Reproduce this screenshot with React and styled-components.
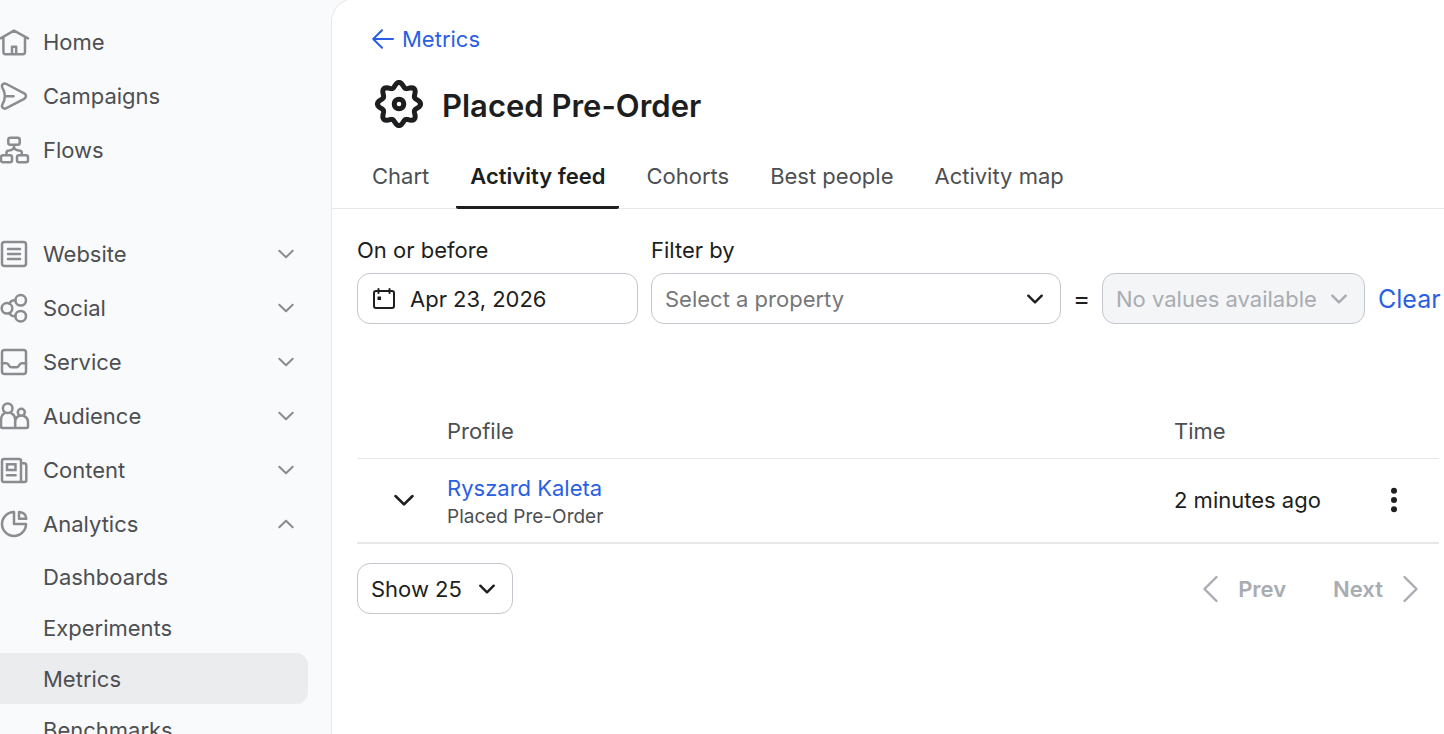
import React from "react";
import styled, { createGlobalStyle } from "styled-components";

const color = {
  ink: "#1d1e20",
  text: "#4d4f52",
  icon: "#8b8c8f",
  muted: "#76777a",
  disabled: "#a9acb1",
  blue: "#2a5fe4",
  line: "#e7e8ea",
  control: "#c3c6cc",
  sidebar: "#f9fafc",
};

const GlobalStyle = createGlobalStyle`
  * { box-sizing: border-box; }
  body {
    margin: 0;
    background: ${color.sidebar};
    color: ${color.ink};
    font-family: Inter, "Liberation Sans", sans-serif;
    font-size: 22px;
    line-height: 28px;
  }
  a { text-decoration: none; }
  button, input, select { font: inherit; color: inherit; margin: 0; }
  svg { display: block; flex: none; fill: none; stroke: currentColor; }
`;

/* ---------- layout ---------- */

const Shell = styled.div`
  display: flex;
  height: 100vh;
  overflow: hidden;
`;

const Sidebar = styled.nav`
  flex: 0 0 331px;
  display: flex;
  flex-direction: column;
  gap: 50px;
  padding: 15px 23px 0 0;
`;

const NavList = styled.ul`
  list-style: none;
  margin: 0;
  padding: 0;
`;

const NavLink = styled.a`
  display: flex;
  align-items: center;
  gap: 13px;
  height: 54px;
  color: ${color.text};
`;

const NavToggle = styled.button`
  display: flex;
  align-items: center;
  gap: 13px;
  width: 100%;
  height: 54px;
  padding: 0 14px 0 0;
  border: 0;
  background: none;
  color: ${color.text};
  text-align: left;
`;

const NavIcon = styled.svg.attrs({ width: 30, height: 30, viewBox: "0 0 30 30", "aria-hidden": true })`
  color: ${color.icon};
  stroke-width: 2.5;
  stroke-linecap: round;
  stroke-linejoin: round;
`;

const NavLabel = styled.span`
  flex: 1;
`;

const SubLink = styled.a`
  display: flex;
  align-items: center;
  height: 51px;
  padding-left: 43px;
  border-radius: 0 12px 12px 0;
  color: ${color.text};
  background: ${(p) => (p.$active ? "#ebecee" : "transparent")};
`;

const Main = styled.main`
  flex: 1;
  min-width: 0;
  margin-top: -2px;
  padding-top: 26px;
  overflow: hidden;
  background: #fff;
  border: solid ${color.line};
  border-width: 1px 0 0 1px;
  border-top-left-radius: 24px;
`;

const Header = styled.header`
  padding: 0 40px;
`;

const BackLink = styled.a`
  display: inline-flex;
  align-items: center;
  gap: 8px;
  color: ${color.blue};
`;

const TitleRow = styled.div`
  display: flex;
  align-items: flex-start;
  gap: 16px;
  margin-top: 22px;
`;

const Title = styled.h1`
  margin: 0;
  font-size: 31px;
  line-height: 58px;
  font-weight: 600;
`;

const Tabs = styled.div`
  display: flex;
  gap: 13px;
  margin-top: 12px;
  padding: 0 26px;
  border-bottom: 1px solid ${color.line};
`;

const Tab = styled.button`
  height: 62px;
  margin-bottom: -1px;
  padding: 0 14px 4px;
  border: 0;
  border-radius: 2px;
  background: linear-gradient(${(p) => (p.$active ? color.ink : "transparent")} 0 0) bottom / 100% 3px no-repeat;
  color: ${(p) => (p.$active ? color.ink : color.text)};
  font-weight: ${(p) => (p.$active ? 600 : 400)};
  white-space: nowrap;
`;

const Body = styled.div`
  padding: 27px 5px 0 25px;
`;

const Filters = styled.form`
  display: flex;
  align-items: flex-end;
  gap: 13px;
`;

const Field = styled.div`
  display: flex;
  flex-direction: column;
  gap: 9px;
  flex: ${(p) => p.$flex || "none"};
  min-width: 0;
`;

const Inline = styled.div`
  display: flex;
  align-items: center;
  justify-content: center;
  height: 51px;
`;

const Operator = styled(Inline)`
  width: 15px;
  font-size: 26px;
`;

const Clear = styled.button`
  padding: 0;
  border: 0;
  background: none;
  color: ${color.blue};
  font-size: 25px;
  width: 61px;
  text-align: left;
`;

/* ---------- controls ---------- */

const Control = styled.div`
  display: grid;
  grid-template-columns: ${(p) => (p.$leading ? "auto 1fr" : "1fr auto")};
  align-items: center;
  height: 51px;
  border: 1px solid ${color.control};
  border-radius: 13px;
  overflow: hidden;
  background: ${(p) => (p.$disabled ? "#f4f5f7" : "#fff")};
  color: ${(p) => (p.$disabled ? color.disabled : color.ink)};

  > svg {
    grid-row: 1;
    grid-column: ${(p) => (p.$leading ? 1 : 2)};
    margin: 0 ${(p) => (p.$leading ? 0 : 17)}px 0 ${(p) => (p.$leading ? 14 : 0)}px;
    pointer-events: none;
  }
`;

const DateInput = styled.input`
  grid-row: 1;
  grid-column: 2;
  width: 100%;
  height: 49px;
  padding: 0 14px;
  border: 0;
  outline: 0;
  background: none;
`;

const Select = styled.select`
  grid-row: 1;
  grid-column: 1 / -1;
  width: 100%;
  height: 49px;
  padding: 0 40px 0 13px;
  border: 0;
  outline: 0;
  opacity: 1;
  appearance: none;
  background: none;
  color: ${(p) => (p.$placeholder ? color.muted : "inherit")};
`;

/* ---------- table ---------- */

const Table = styled.table`
  width: 100%;
  margin-top: 80px;
  table-layout: fixed;
  border-collapse: collapse;
  border-bottom: 2px solid ${color.line};
`;

const HeadCell = styled.th`
  height: 54px;
  padding: 0;
  border-bottom: 1px solid ${color.line};
  color: ${color.text};
  font-weight: 400;
  text-align: left;
`;

const Cell = styled.td`
  height: 85px;
  padding: 0;
  text-align: left;
  vertical-align: middle;

  &:first-child { padding-left: 4px; }
`;

const IconButton = styled.button`
  display: flex;
  justify-content: center;
  align-items: center;
  width: 100%;
  height: 48px;
  padding: 0;
  border: 0;
  background: none;
`;

const ProfileLink = styled.a`
  display: block;
  padding-top: 4px;
  line-height: 30px;
  color: ${color.blue};
`;

const EventName = styled.div`
  color: ${color.text};
  font-size: 19px;
`;

const Footer = styled.div`
  display: flex;
  align-items: center;
  justify-content: space-between;
  margin-top: 19px;
`;

const Pager = styled.div`
  display: flex;
  gap: 47px;
  padding-right: 21px;
`;

const PagerButton = styled.button`
  display: flex;
  align-items: center;
  gap: 20px;
  padding: 0;
  border: 0;
  background: none;
  font-weight: 600;
  && { color: ${color.disabled}; }
`;

/* ---------- icons ---------- */

const Chevron = ({ up, width = 16, stroke = 2, ...rest }) => (
  <svg width={width} height={(width * 5) / 8} viewBox="0 0 16 10" strokeWidth={stroke} strokeLinecap="round" strokeLinejoin="round" aria-hidden="true" {...rest}>
    <path d={up ? "M1.3 8.3 8 1.7 14.7 8.3" : "M1.3 1.7 8 8.3 14.7 1.7"} />
  </svg>
);

const icons = {
  home: <path d="M.5 11.3 14 3.7 28 11.300M3.400 10.500V25A2.200 2.200 0 0 0 5.600 27.200H22.800A2.200 2.200 0 0 0 25 25V10.500M12 27V19.700H16.200V27" />,
  campaigns: <path d="M2.200 6.400C1.200 3.400 3.800 1.700 6.400 3L24.200 12.300Q27.800 15.100 24.200 17.900L6.400 27.200C3.800 28.500 1.200 26.800 2.200 23.800Q7.600 15.100 2.200 6.400ZM5.500 15.200H13.500" />,
  flows: (
    <>
      <rect x="8.300" y="2.700" width="11.400" height="7" rx="2" />
      <rect x="1" y="20.300" width="11" height="7" rx="2" />
      <rect x="17" y="20.300" width="11" height="7" rx="2" />
      <path d="M14 10V12.500M6.500 20V17.500Q6.500 15.700 9 15.500 13.500 15 14 12 14.500 15 19 15.500 21.800 15.700 21.800 17.500V20" />
    </>
  ),
  website: (
    <>
      <rect x="2" y="3" width="24" height="24" rx="2.500" />
      <path d="M8 10H20M8 15H20M8 20H20" />
    </>
  ),
  social: (
    <>
      <circle cx="7" cy="15.300" r="5.300" />
      <circle cx="20.700" cy="7.300" r="5.300" />
      <circle cx="20.700" cy="23.200" r="5.300" />
      <path d="M9 10.400 11.500 8Q13 7.200 15.400 7.300M9 20.200 11.500 22.500Q13 23.300 15.400 23.200" />
    </>
  ),
  service: (
    <>
      <rect x="2" y="3" width="24" height="24" rx="2.500" />
      <path d="M2 16.200H6.500C9 16.200 8.500 20.300 11.500 20.300H16.500C19.500 20.300 19 16.200 21.500 16.200H26" />
    </>
  ),
  audience: (
    <>
      <circle cx="7.700" cy="7.300" r="4.800" />
      <circle cx="21.300" cy="11.300" r="3.500" />
      <path d="M4.600 12.200C2 13.500 1 16 1 19V25.500Q1 27 2.500 27H26.500Q28 27 28 25.500V21.500C28 18.500 26.500 16 23.800 15M11 12.200C14 13.500 15.200 16 15.200 19V27M15.200 21C15.200 18 16.500 16 18.800 15" />
    </>
  ),
  content: (
    <>
      <path d="M21 27H4Q2 27 2 25V6Q2 4 4 4H19Q21 4 21 6V27H24.500Q26.300 27 26.300 25V10.500Q26.300 8.300 24 8.300H21" />
      <rect x="7" y="9.300" width="8.500" height="5.700" strokeLinejoin="miter" />
      <path d="M7 20.300H15.500" />
    </>
  ),
  analytics: (
    <path d="M14 3A12 12 0 1 0 26 15H14ZM19 3Q26 3.500 26.300 9.800H19Z" />
  ),
};

// Closed outline of an eight-lobed gear, sampled around its centre.
const gearPath =
  Array.from({ length: 96 }, (_, i) => {
    const t = (i / 96) * Math.PI * 2;
    const r = 19.2 + 2.4 * Math.cos(8 * t);
    return `${i ? "L" : "M"}${(27 + r * Math.sin(t)).toFixed(2)} ${(27 - r * Math.cos(t)).toFixed(2)}`;
  }).join("") + "Z";

const GearIcon = () => (
  <svg width="54" height="54" viewBox="0 0 54 54" strokeWidth="5" strokeLinejoin="round" aria-hidden="true">
    <path d={gearPath} />
    <circle cx="27" cy="27" r="4.800" />
  </svg>
);

const ArrowLeft = () => (
  <svg width="22" height="20" viewBox="0 0 22 20" strokeWidth="2" strokeLinecap="round" strokeLinejoin="round" aria-hidden="true">
    <path d="M10 1.200 1.200 10 10 18.800M1.200 10H21" />
  </svg>
);

const CalendarIcon = () => (
  <svg width="24" height="22" viewBox="0 0 24 22" strokeWidth="2" strokeLinecap="round" strokeLinejoin="round" aria-hidden="true">
    <path d="M4 3H20Q22 3 22 5V18Q22 20 20 20H4Q2 20 2 18V5Q2 3 4 3ZM6.500 1V5M17.500 1V5" />
    <rect x="5.500" y="8.500" width="3.500" height="3.500" fill="currentColor" stroke="none" />
  </svg>
);

const DotsIcon = () => (
  <svg width="8" height="26" viewBox="0 0 8 26" aria-hidden="true">
    {[3.8, 13, 22.2].map((y) => (
      <circle key={y} cx="4" cy={y} r="3" fill="currentColor" stroke="none" />
    ))}
  </svg>
);

const PageArrow = ({ next }) => (
  <svg width="15" height="28" viewBox="0 0 15 28" strokeWidth="2.400" strokeLinecap="round" strokeLinejoin="round" aria-hidden="true">
    <path d={next ? "M1.500 2 13.500 14 1.500 26" : "M13.500 2 1.500 14 13.500 26"} />
  </svg>
);

/* ---------- page ---------- */

const primary = [
  ["Home", "home"],
  ["Campaigns", "campaigns"],
  ["Flows", "flows"],
];
const groups = [
  ["Website", "website"],
  ["Social", "social"],
  ["Service", "service"],
  ["Audience", "audience"],
  ["Content", "content"],
  ["Analytics", "analytics"],
];
const analyticsPages = ["Dashboards", "Experiments", "Metrics", "Benchmarks"];
const tabs = ["Chart", "Activity feed", "Cohorts", "Best people", "Activity map"];

export default function App() {
  return (
    <>
      <GlobalStyle />
      <Shell>
        <Sidebar aria-label="Main">
          <NavList>
            {primary.map(([label, icon]) => (
              <li key={label}>
                <NavLink href="#">
                  <NavIcon>{icons[icon]}</NavIcon>
                  <NavLabel>{label}</NavLabel>
                </NavLink>
              </li>
            ))}
          </NavList>
          <NavList>
            {groups.map(([label, icon]) => (
              <li key={label}>
                <NavToggle type="button" aria-expanded={label === "Analytics"}>
                  <NavIcon>{icons[icon]}</NavIcon>
                  <NavLabel>{label}</NavLabel>
                  <Chevron up={label === "Analytics"} color={color.icon} />
                </NavToggle>
              </li>
            ))}
            {analyticsPages.map((label) => (
              <li key={label}>
                <SubLink href="#" $active={label === "Metrics"}>{label}</SubLink>
              </li>
            ))}
          </NavList>
        </Sidebar>

        <Main>
          <Header>
            <BackLink href="#">
              <ArrowLeft />
              Metrics
            </BackLink>
            <TitleRow>
              <GearIcon />
              <Title>Placed Pre-Order</Title>
            </TitleRow>
          </Header>
          <Tabs role="tablist">
            {tabs.map((label) => (
              <Tab key={label} type="button" role="tab" aria-selected={label === "Activity feed"} $active={label === "Activity feed"}>
                {label}
              </Tab>
            ))}
          </Tabs>

          <Body>
            <Filters>
              <Field $flex="0 0 281px">
                <label htmlFor="date">On or before</label>
                <Control $leading>
                  <CalendarIcon />
                  <DateInput id="date" type="text" defaultValue="Apr 23, 2026" />
                </Control>
              </Field>
              <Field $flex="1">
                <label htmlFor="property">Filter by</label>
                <Control>
                  <Select id="property" $placeholder>
                    <option>Select a property</option>
                  </Select>
                  <Chevron stroke={2.4} />
                </Control>
              </Field>
              <Operator>=</Operator>
              <Field $flex="0 0 263px">
                <Control $disabled>
                  <Select aria-label="Property value" disabled>
                    <option>No values available</option>
                  </Select>
                  <Chevron stroke={2.4} />
                </Control>
              </Field>
              <Inline>
                <Clear type="reset">Clear</Clear>
              </Inline>
            </Filters>

            <Table>
              <colgroup>
                <col width="90" />
                <col />
                <col width="175" />
                <col width="90" />
              </colgroup>
              <thead>
                <tr>
                  <HeadCell />
                  <HeadCell scope="col">Profile</HeadCell>
                  <HeadCell scope="col">Time</HeadCell>
                  <HeadCell />
                </tr>
              </thead>
              <tbody>
                <tr>
                  <Cell>
                    <IconButton type="button" aria-label="Expand row">
                      <Chevron width={20} stroke={2.2} />
                    </IconButton>
                  </Cell>
                  <Cell>
                    <ProfileLink href="#">Ryszard Kaleta</ProfileLink>
                    <EventName>Placed Pre-Order</EventName>
                  </Cell>
                  <Cell>2 minutes ago</Cell>
                  <Cell>
                    <IconButton type="button" aria-label="More actions">
                      <DotsIcon />
                    </IconButton>
                  </Cell>
                </tr>
              </tbody>
            </Table>

            <Footer>
              <Field $flex="0 0 156px">
                <Control>
                  <Select aria-label="Rows per page">
                    <option>Show 25</option>
                  </Select>
                  <Chevron stroke={2.4} />
                </Control>
              </Field>
              <Pager>
                <PagerButton type="button" disabled>
                  <PageArrow />
                  Prev
                </PagerButton>
                <PagerButton type="button" disabled>
                  Next
                  <PageArrow next />
                </PagerButton>
              </Pager>
            </Footer>
          </Body>
        </Main>
      </Shell>
    </>
  );
}
